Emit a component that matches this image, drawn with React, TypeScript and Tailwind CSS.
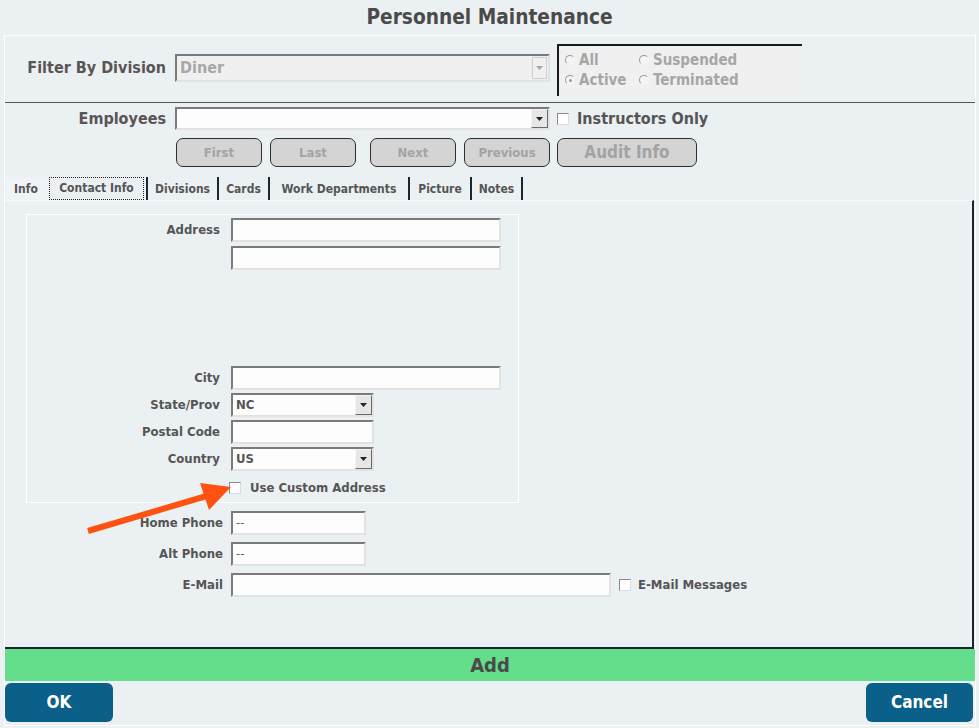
import React from "react";

// sunken 3D edge shared by the text boxes and drop-downs
const inset =
  "border-2 border-t-[#7a7a7a] border-l-[#7a7a7a] border-b-[#e2e2e2] border-r-[#e2e2e2]";

function TextBox({ w, value }: { w: string; value?: string }) {
  return (
    <div
      className={`${w} h-[24px] ${inset} bg-[#fdfdfd] flex items-center pl-[3px] text-[13px] text-[#666]`}
    >
      {value}
    </div>
  );
}

function DropBox({
  w,
  h,
  value,
  disabled,
  text,
}: {
  w: string;
  h: string;
  value?: string;
  disabled?: boolean;
  text?: string;
}) {
  return (
    <div
      className={`${w} ${h} ${inset} flex items-stretch ${
        disabled ? "bg-[#f0f0f0]" : "bg-[#fdfdfd]"
      }`}
    >
      <div
        className={`flex-1 flex items-center pl-[3px] font-bold ${
          text ?? "text-[13px] text-[#555]"
        }`}
      >
        {value}
      </div>
      {disabled ? (
        <div className="w-[15px] my-[1px] mr-[1px] border border-[#cfcfcf] flex items-center justify-center">
          <svg width="7" height="4" viewBox="0 0 7 4">
            <path d="M0 0h7L3.5 4z" fill="#a8a8a8" />
          </svg>
        </div>
      ) : (
        <div className="w-[17px] border border-t-[#f4f4f4] border-l-[#f4f4f4] border-b-[#6a6a6a] border-r-[#6a6a6a] bg-[#e6e6e6] flex items-center justify-center">
          <svg width="7" height="4" viewBox="0 0 7 4">
            <path d="M0 0h7L3.5 4z" fill="#222" />
          </svg>
        </div>
      )}
    </div>
  );
}

function Check() {
  return (
    <div className="w-[12px] h-[12px] border border-t-[#8a8a8a] border-l-[#8a8a8a] border-b-[#dcdcdc] border-r-[#dcdcdc] bg-white" />
  );
}

function Radio({ label, on, w }: { label: string; on?: boolean; w?: string }) {
  return (
    <div className={`flex items-center h-[20px] ${w ?? ""}`}>
      <div className="relative w-[10px] h-[10px] rounded-full border border-t-[#9a9a9a] border-l-[#9a9a9a] border-b-[#f4f4f4] border-r-[#f4f4f4] bg-[#f4f4f4]">
        {on && (
          <div className="absolute left-[2.5px] top-[2.5px] w-[3px] h-[3px] rounded-full bg-[#999]" />
        )}
      </div>
      <span className="ml-[4px] text-[15px] font-bold text-[#a6a6a6]">{label}</span>
    </div>
  );
}

function NavButton({ w, label, big }: { w: string; label: string; big?: boolean }) {
  return (
    <div
      className={`${w} h-[29px] rounded-[7px] border border-[#2e2e2e] bg-[#d4d4d4] flex items-center justify-center font-bold text-[#a3a3a3] ${
        big ? "text-[17px]" : "text-[13px]"
      }`}
    >
      {label}
    </div>
  );
}

function Label({ w, children }: { w: string; children: React.ReactNode }) {
  return (
    <div className={`${w} shrink-0 text-right text-[13px] font-bold text-[#555]`}>{children}</div>
  );
}

const tabs = [
  { name: "Divisions", w: "w-[71px]" },
  { name: "Cards", w: "w-[51px]" },
  { name: "Work Departments", w: "w-[140px]" },
  { name: "Picture", w: "w-[62px]" },
  { name: "Notes", w: "w-[51px]" },
];

export default function App() {
  return (
    <div className="relative w-[979px] h-[728px] overflow-hidden bg-[#ebf0f3] font-[family-name:'DejaVu_Sans_Condensed','DejaVu_Sans',sans-serif] font-stretch-condensed">
      <h1 className="h-[35px] flex items-center justify-center text-[20.7px] font-bold text-[#4a4a4a]">
        Personnel Maintenance
      </h1>

      <div className="ml-[4px] w-[972px] h-[691px] border border-white flex flex-col">
        {/* division filter */}
        <div className="h-[67px] shrink-0 flex items-start pt-[8px] border-b border-[#555]">
          <div className="mt-[10px] flex items-center">
            <Label w="w-[161px]">
              <span className="text-[16px] text-[#5a5555]">Filter By Division</span>
            </Label>
            <div className="ml-[9px]">
              <DropBox
                w="w-[375px]"
                h="h-[28px]"
                value="Diner"
                disabled
                text="text-[16px] text-[#a8a8a8]"
              />
            </div>
          </div>
          <div className="ml-[7px] w-[245px] h-[52px] border-t-2 border-l-2 border-[#1a1a1a] bg-[#f0f0f0] pt-[4px] pl-[6px]">
            <div className="flex">
              <Radio label="All" w="w-[74px]" />
              <Radio label="Suspended" />
            </div>
            <div className="flex">
              <Radio label="Active" on w="w-[74px]" />
              <Radio label="Terminated" />
            </div>
          </div>
        </div>

        {/* employee picker */}
        <div className="shrink-0 pt-[4px]">
          <div className="flex items-center h-[23px]">
            <Label w="w-[161px]">
              <span className="text-[16px] text-[#5a5555]">Employees</span>
            </Label>
            <div className="ml-[9px]">
              <DropBox w="w-[375px]" h="h-[23px]" />
            </div>
            <div className="ml-[7px]">
              <Check />
            </div>
            <span className="ml-[8px] text-[16px] font-bold text-[#555]">Instructors Only</span>
          </div>

          <div className="mt-[8px] ml-[171px] flex">
            <NavButton w="w-[86px]" label="First" />
            <div className="ml-[8px]">
              <NavButton w="w-[86px]" label="Last" />
            </div>
            <div className="ml-[14px]">
              <NavButton w="w-[86px]" label="Next" />
            </div>
            <div className="ml-[8px]">
              <NavButton w="w-[86px]" label="Previous" />
            </div>
            <div className="ml-[7px]">
              <NavButton w="w-[140px]" label="Audit Info" big />
            </div>
          </div>

          {/* tab strip */}
          <div className="mt-[10px] h-[23px] flex text-[12px] font-bold text-[#555]">
            <div className="w-[43px] bg-[#eff3f5] flex items-center pl-[9px]">Info</div>
            <div className="w-[100px] flex items-stretch border-r-2 border-[#1c2630] pl-[1px] pr-[2px]">
              <div className="flex-1 border border-dotted border-[#222] flex items-start justify-center pt-[1px]">
                Contact Info
              </div>
            </div>
            {tabs.map((t) => (
              <div
                key={t.name}
                className={`${t.w} border-r-2 border-[#1c2630] flex items-center justify-center`}
              >
                {t.name}
              </div>
            ))}
          </div>
        </div>

        {/* contact info page */}
        <div className="w-[969px] h-[449px] shrink-0 border-t border-[#f7f9fa] border-r-2 border-r-[#1c2630] border-b-2 border-b-[#1c2630]">
          <div className="mt-[13px] ml-[21px] w-[493px] border border-white pt-[3px] pb-[8px] flex flex-col">
            <div className="flex items-center">
              <Label w="w-[193px]">Address</Label>
              <div className="ml-[11px]">
                <TextBox w="w-[270px]" />
              </div>
            </div>
            <div className="mt-[4px] ml-[204px]">
              <TextBox w="w-[270px]" />
            </div>
            <div className="mt-[96px] flex items-center">
              <Label w="w-[193px]">City</Label>
              <div className="ml-[11px]">
                <TextBox w="w-[270px]" />
              </div>
            </div>
            <div className="mt-[3px] flex items-center">
              <Label w="w-[193px]">State/Prov</Label>
              <div className="ml-[11px]">
                <DropBox w="w-[143px]" h="h-[24px]" value="NC" />
              </div>
            </div>
            <div className="mt-[3px] flex items-center">
              <Label w="w-[193px]">Postal Code</Label>
              <div className="ml-[11px]">
                <TextBox w="w-[143px]" />
              </div>
            </div>
            <div className="mt-[3px] flex items-center">
              <Label w="w-[193px]">Country</Label>
              <div className="ml-[11px]">
                <DropBox w="w-[143px]" h="h-[24px]" value="US" />
              </div>
            </div>
            <div className="mt-[11px] ml-[202px] h-[12px] flex items-center">
              <Check />
              <span className="ml-[9px] text-[13px] font-bold text-[#555]">Use Custom Address</span>
            </div>
          </div>

          <div className="mt-[8px] flex items-center">
            <Label w="w-[218px]">Home Phone</Label>
            <div className="ml-[8px]">
              <TextBox w="w-[135px]" value="--" />
            </div>
          </div>
          <div className="mt-[7px] flex items-center">
            <Label w="w-[218px]">Alt Phone</Label>
            <div className="ml-[8px]">
              <TextBox w="w-[135px]" value="--" />
            </div>
          </div>
          <div className="mt-[7px] flex items-center">
            <Label w="w-[218px]">E-Mail</Label>
            <div className="ml-[8px]">
              <TextBox w="w-[380px]" />
            </div>
            <div className="ml-[8px]">
              <Check />
            </div>
            <span className="ml-[7px] text-[13px] font-bold text-[#555]">E-Mail Messages</span>
          </div>
        </div>

        <div className="h-[32px] shrink-0 bg-[#64de8a] flex items-center justify-center text-[20px] font-bold text-[#4a4a4a]">
          Add
        </div>

        <div className="mt-[2px] flex justify-between pr-[2px]">
          <button className="w-[108px] h-[39px] rounded-[6px] bg-[#0a6089] text-white text-[17px] font-bold">
            OK
          </button>
          <button className="w-[107px] h-[39px] rounded-[6px] bg-[#0a6089] text-white text-[17px] font-bold">
            Cancel
          </button>
        </div>
      </div>

      {/* callout arrow */}
      <svg className="absolute inset-0 pointer-events-none" width="979" height="728">
        <line x1="88" y1="531" x2="210" y2="495" stroke="#ff5212" strokeWidth="6" />
        <polygon points="231,487 200,483 209,510" fill="#ff5212" />
      </svg>
    </div>
  );
}
